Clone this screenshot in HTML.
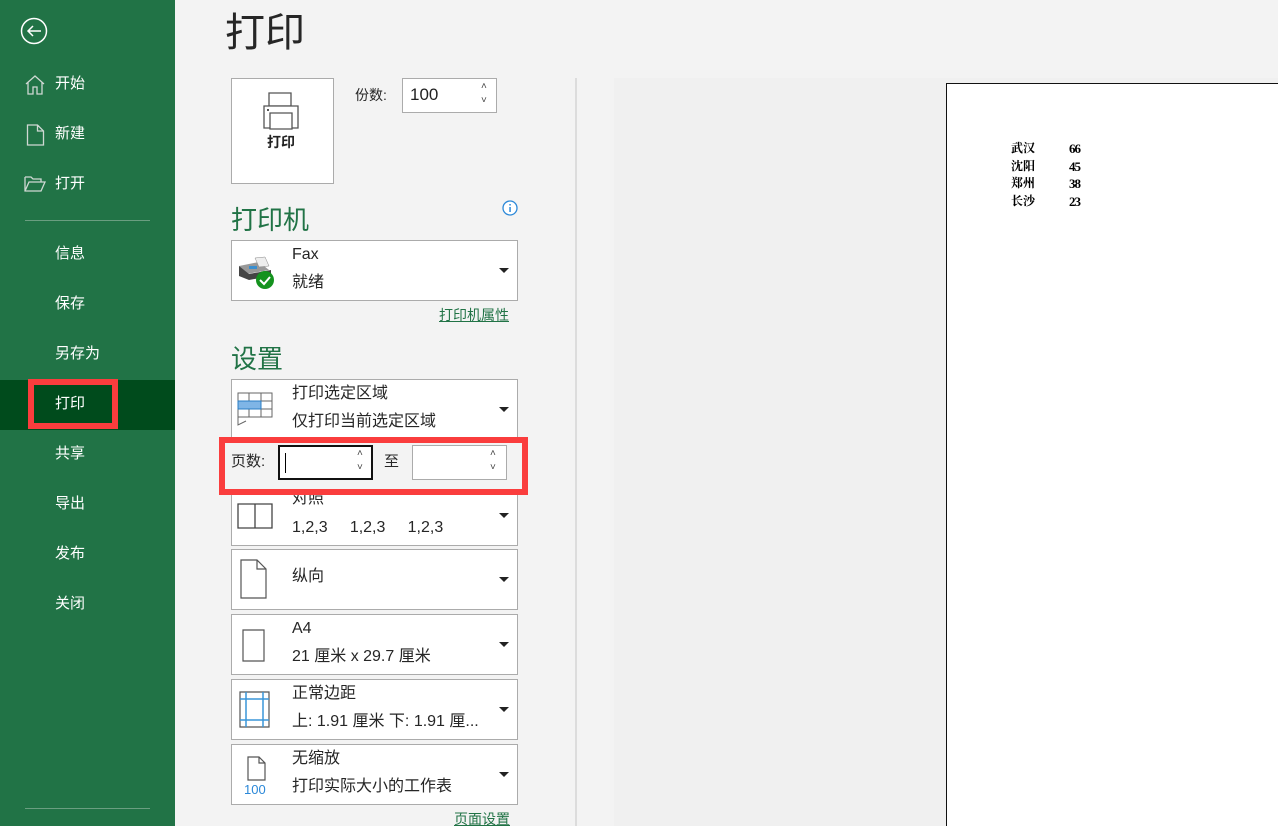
<!DOCTYPE html>
<html style="overflow:hidden;height:826px"><head><meta charset="utf-8"><style>
*{margin:0;padding:0;box-sizing:border-box}
body{width:1278px;height:826px;overflow:hidden;background:#f3f3f3;font-family:"Liberation Sans","Noto Sans CJK SC",sans-serif;position:relative;color:#262626}
.a{position:absolute}
.side{left:0;top:0;width:175px;height:826px;background:#217346}
.nav{position:absolute;left:55px;color:#fff;font-size:15px;line-height:20px}
.dd{position:absolute;left:231px;width:287px;background:#fff;border:1px solid #ababab}
.dd .t1,.dd .t2{position:absolute;left:60px;font-size:16px;line-height:20px;color:#262626;white-space:nowrap}
.dd .t1{top:4px}.dd .t2{top:32px}
.dd .ar{position:absolute;right:8px;top:27px;width:0;height:0;border-left:5px solid transparent;border-right:5px solid transparent;border-top:5px solid #222}
.dd svg{position:absolute}
h2{position:absolute;font-weight:normal;color:#217346;font-size:26px;line-height:34px}
.lnk{position:absolute;color:#217346;font-size:14px;line-height:18px;text-decoration:underline}
</style></head><body>
<div class="a side"></div>
<svg class="a" style="left:20px;top:17px" width="30" height="30" viewBox="0 0 30 30"><circle cx="14" cy="14" r="12.5" fill="none" stroke="#fff" stroke-width="1.5"/><path d="M8 14h13M13 9l-5 5 5 5" fill="none" stroke="#fff" stroke-width="1.5"/></svg>
<svg class="a" style="left:24px;top:74px" width="22" height="22" viewBox="0 0 22 22"><path d="M2 10L11 2l9 8M4 8v12h5v-7h4v7h5V8" fill="none" stroke="#cfd8d3" stroke-width="1.3"/></svg>
<div class="nav" style="top:74px">开始</div>
<svg class="a" style="left:26px;top:124px" width="20" height="22" viewBox="0 0 20 22"><path d="M1.5 1h10l6 6v14h-16z M11.5 1v6h6" fill="none" stroke="#cfd8d3" stroke-width="1.3"/></svg>
<div class="nav" style="top:124px">新建</div>
<svg class="a" style="left:24px;top:175px" width="22" height="18" viewBox="0 0 22 18"><path d="M1 2h6l2 2h8v3M1 2v14h16l4-9H5L1 16" fill="none" stroke="#cfd8d3" stroke-width="1.3"/></svg>
<div class="nav" style="top:174px">打开</div>
<div class="a" style="left:25px;top:220px;width:125px;height:1px;background:#6a9e80"></div>
<div class="nav" style="top:244px">信息</div>
<div class="nav" style="top:294px">保存</div>
<div class="nav" style="top:344px">另存为</div>
<div class="a" style="left:0;top:380px;width:175px;height:50px;background:#004b1c"></div>
<div class="a" style="left:28px;top:379px;width:90px;height:50px;border:6px solid #fa3d3d"></div>
<div class="nav" style="top:394px">打印</div>
<div class="nav" style="top:444px">共享</div>
<div class="nav" style="top:494px">导出</div>
<div class="nav" style="top:544px">发布</div>
<div class="nav" style="top:594px">关闭</div>
<div class="a" style="left:25px;top:808px;width:125px;height:1px;background:#6a9e80"></div>

<div class="a" style="left:225px;top:8px;font-size:40px;line-height:50px;color:#262626">打印</div>
<div class="a" style="left:575px;top:78px;width:2px;height:748px;background:#dcdcdc"></div>
<div class="a" style="left:614px;top:78px;width:664px;height:748px;background:#f0f0f0"></div>

<div class="a" style="left:231px;top:78px;width:103px;height:106px;background:#fff;border:1px solid #ababab"></div>
<svg class="a" style="left:263px;top:92px" width="36" height="38" viewBox="0 0 36 38"><path d="M6 1h22v13H6z" fill="#fff" stroke="#555" stroke-width="1.3"/><path d="M1 14h34v22H1z" fill="#fff" stroke="#555" stroke-width="1.3"/><path d="M7 21h22v16H7z" fill="#fff" stroke="#555" stroke-width="1.3"/><rect x="4" y="17" width="2" height="2" fill="#555"/></svg>
<div class="a" style="left:267px;top:133px;font-size:14px;line-height:18px;font-weight:bold;color:#222">打印</div>
<div class="a" style="left:355px;top:86px;font-size:14px;line-height:18px">份数:</div>
<div class="a" style="left:402px;top:78px;width:95px;height:35px;background:#fff;border:1px solid #ababab"></div>
<div class="a" style="left:410px;top:85px;font-size:17px;line-height:20px;color:#222">100</div>
<div class="a" style="left:481px;top:80px;font-size:10px;color:#444;line-height:14px">˄<br>˅</div>

<h2 style="left:231px;top:203px">打印机</h2>
<svg class="a" style="left:502px;top:200px" width="16" height="16" viewBox="0 0 16 16"><circle cx="8" cy="8" r="7" fill="#fff" stroke="#2b88d8" stroke-width="1.3"/><rect x="7.3" y="7" width="1.5" height="5" fill="#2b88d8"/><rect x="7.3" y="4" width="1.5" height="1.5" fill="#2b88d8"/></svg>
<div class="dd" style="top:240px;height:61px">
<svg style="left:5px;top:15px" width="40" height="34" viewBox="0 0 40 34"><path d="M2 10l20-4 10 8-22 4z" fill="#999"/><path d="M2 10v10l10 4 22-4V14L12 18z" fill="#444"/><path d="M18 2l10-1 4 9-10 1z" fill="#eee" stroke="#888" stroke-width=".5"/><rect x="12" y="10" width="8" height="3" fill="#3a8fd0"/><circle cx="28" cy="24" r="9" fill="#14921e"/><path d="M23 24l4 4 6-7" fill="none" stroke="#fff" stroke-width="2"/></svg>
<div class="t1">Fax</div><div class="t2">就绪</div><div class="ar"></div></div>
<div class="lnk" style="left:439px;top:306px">打印机属性</div>

<h2 style="left:231px;top:342px">设置</h2>
<div class="dd" style="top:379px;height:61px">
<svg style="left:5px;top:12px" width="36" height="34" viewBox="0 0 36 34"><path d="M1 1h34v24H1z M1 9h34M1 17h34M12 1v24M24 1v24" fill="none" stroke="#666" stroke-width="1"/><rect x="1" y="9" width="23" height="8" fill="#7fb5e6" stroke="#2a7dc4"/><path d="M1 25v8l8-4" fill="none" stroke="#666"/></svg>
<div class="t1">打印选定区域</div><div class="t2">仅打印当前选定区域</div><div class="ar"></div></div>

<div class="dd" style="top:485px;height:61px">
<svg style="left:5px;top:17px" width="36" height="26" viewBox="0 0 36 26"><path d="M1 1h34v24H1zM18 1v24" fill="none" stroke="#444" stroke-width="1.3"/></svg>
<div class="t1" style="top:3px">对照</div><div class="t2">1,2,3&nbsp;&nbsp;&nbsp;&nbsp;&nbsp;1,2,3&nbsp;&nbsp;&nbsp;&nbsp;&nbsp;1,2,3</div><div class="ar"></div></div>

<div class="a" style="left:219px;top:437px;width:309px;height:58px;border:6px solid #fa3d3d;background:#f3f3f3"></div>
<div class="a" style="left:231px;top:452px;font-size:15px;line-height:20px">页数:</div>
<div class="a" style="left:278px;top:445px;width:95px;height:35px;background:#fff;border:2px solid #111"></div>
<div class="a" style="left:285px;top:453px;width:1px;height:20px;background:#000"></div>
<div class="a" style="left:357px;top:447px;font-size:10px;color:#444;line-height:14px">˄<br>˅</div>
<div class="a" style="left:384px;top:452px;font-size:15px;line-height:20px">至</div>
<div class="a" style="left:412px;top:445px;width:95px;height:35px;background:#fff;border:1px solid #ababab"></div>
<div class="a" style="left:490px;top:447px;font-size:10px;color:#444;line-height:14px">˄<br>˅</div>

<div class="dd" style="top:549px;height:61px">
<svg style="left:8px;top:9px" width="28" height="40" viewBox="0 0 28 40"><path d="M1 1h16l9 9v29H1zM17 1v9h9" fill="#fff" stroke="#555" stroke-width="1.2"/></svg>
<div class="t1" style="top:17px">纵向</div><div class="ar"></div></div>

<div class="dd" style="top:614px;height:61px">
<svg style="left:10px;top:14px" width="24" height="34" viewBox="0 0 24 34"><path d="M1 1h21v31H1z" fill="#fff" stroke="#555" stroke-width="1.2"/></svg>
<div class="t1">A4</div><div class="t2">21 厘米 x 29.7 厘米</div><div class="ar"></div></div>

<div class="dd" style="top:679px;height:61px">
<svg style="left:7px;top:11px" width="32" height="38" viewBox="0 0 32 38"><path d="M1 1h29v35H1z" fill="#fff" stroke="#555" stroke-width="1.2"/><path d="M7 1v35M24 1v35M1 8h29M1 29h29" stroke="#3a96d8" stroke-width="1.5"/></svg>
<div class="t1">正常边距</div><div class="t2">上: 1.91 厘米 下: 1.91 厘...</div><div class="ar"></div></div>

<div class="dd" style="top:744px;height:61px">
<svg style="left:10px;top:11px" width="30" height="40" viewBox="0 0 30 40"><path d="M6 1h11l6 6v17H6zM17 1v6h6" fill="#fff" stroke="#555" stroke-width="1.2"/><text x="2" y="38" font-size="13" fill="#2b88d8" font-family="Liberation Sans">100</text></svg>
<div class="t1">无缩放</div><div class="t2">打印实际大小的工作表</div><div class="ar"></div></div>
<div class="lnk" style="left:454px;top:810px">页面设置</div>

<div class="a" style="left:946px;top:83px;width:332px;height:743px;background:#fff;border-left:1.5px solid #111;border-top:1.5px solid #111"></div>
<div class="a" style="left:1011px;top:140px;font-family:'Liberation Serif','Noto Serif CJK SC',serif;font-size:12px;font-weight:bold;line-height:17.5px;color:#000">武汉<br>沈阳<br>郑州<br>长沙</div>
<div class="a" style="left:1069px;top:140px;font-family:'Liberation Serif',serif;font-size:13px;font-weight:bold;line-height:17.5px;color:#000;letter-spacing:-1px">66<br>45<br>38<br>23</div>
</body></html>
